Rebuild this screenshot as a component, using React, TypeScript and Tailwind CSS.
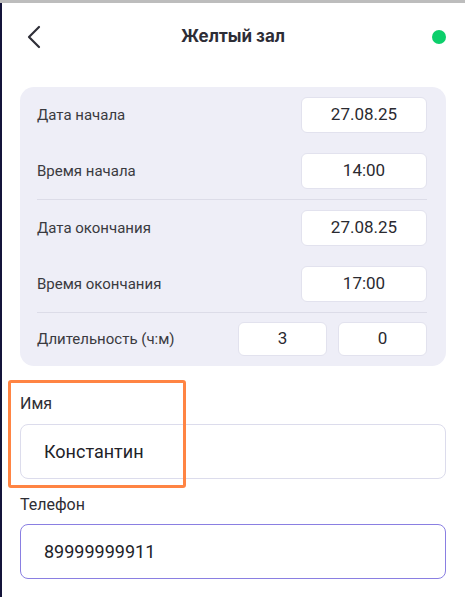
import React from "react";

const font = { fontFamily: "Roboto, 'Noto Sans', sans-serif" };

function Field({ value, className = "" }: { value: string; className?: string }) {
  return (
    <div
      className={`flex items-center justify-center rounded-md border border-[#e2e2ee] bg-white text-[17px] text-[#2a2a30] ${className}`}
    >
      {value}
    </div>
  );
}

function Row({ label, value }: { label: string; value: string }) {
  return (
    <div className="flex h-9 items-center justify-between">
      <span className="text-[15px] text-[#3a3a40]">{label}</span>
      <Field value={value} className="h-9 w-[126px]" />
    </div>
  );
}

export default function App() {
  return (
    <div className="relative h-[597px] w-full overflow-hidden bg-white" style={font}>
      <div className="h-[3px] bg-[#bdbdbd]" />
      <div className="flex h-[594px] border-l-2 border-[#14143a]">
        <div className="flex w-full flex-col pl-[18px] pr-[19px]">
          {/* header */}
          <div className="relative flex h-[68px] items-center justify-center">
            <svg
              className="absolute left-[6px] top-[22px]"
              width="16"
              height="24"
              viewBox="0 0 16 24"
              fill="none"
            >
              <path d="M13 2 L3 12 L13 22" stroke="#2f2f38" strokeWidth="2.2" strokeLinecap="round" strokeLinejoin="round" />
            </svg>
            <span
              className="text-[17px] font-bold text-[#2d2d36]"
              style={{ fontFamily: "Inter, Roboto, sans-serif" }}
            >
              Желтый зал
            </span>
            <span className="absolute right-0 top-[27px] h-[14px] w-[14px] rounded-full bg-[#0ccf6b]" />
          </div>

          {/* time panel */}
          <div className="mt-4 rounded-[14px] bg-[#eeeef7] pb-[10px] pl-[17px] pr-[19px] pt-[10px]">
            <div className="flex flex-col gap-5">
              <Row label="Дата начала" value="27.08.25" />
              <Row label="Время начала" value="14:00" />
            </div>
            <div className="my-[10px] h-px bg-[#dcdce8]" />
            <div className="flex flex-col gap-5">
              <Row label="Дата окончания" value="27.08.25" />
              <Row label="Время окончания" value="17:00" />
            </div>
            <div className="mb-[9px] mt-[10px] h-px bg-[#dcdce8]" />
            <div className="flex h-[34px] items-center">
              <span className="flex-1 text-[15px] text-[#3a3a40]">Длительность (ч:м)</span>
              <div className="flex gap-[11px]">
                <Field value="3" className="h-[34px] w-[89px]" />
                <Field value="0" className="h-[34px] w-[89px]" />
              </div>
            </div>
          </div>

          {/* name */}
          <label className="mt-[27px] text-[16px] leading-[22px] text-[#2e2e34]">Имя</label>
          <div className="mt-[9px] flex h-[55px] items-center rounded-lg border border-[#dcdcec] bg-white pl-[23px] text-[18px] text-[#222228]">
            Константин
          </div>

          {/* phone */}
          <label className="mt-[15px] text-[16px] leading-[22px] text-[#2e2e34]">Телефон</label>
          <div className="mt-[8px] flex h-[55px] items-center rounded-lg border border-[#8a7fe2] bg-white pl-[23px] text-[18px] text-[#222228]">
            89999999911
          </div>
        </div>
      </div>

      {/* annotation highlight */}
      <div className="pointer-events-none absolute left-[8px] top-[380px] h-[108px] w-[178px] rounded-[3px] border-[3px] border-[#ff8443]" />
    </div>
  );
}
